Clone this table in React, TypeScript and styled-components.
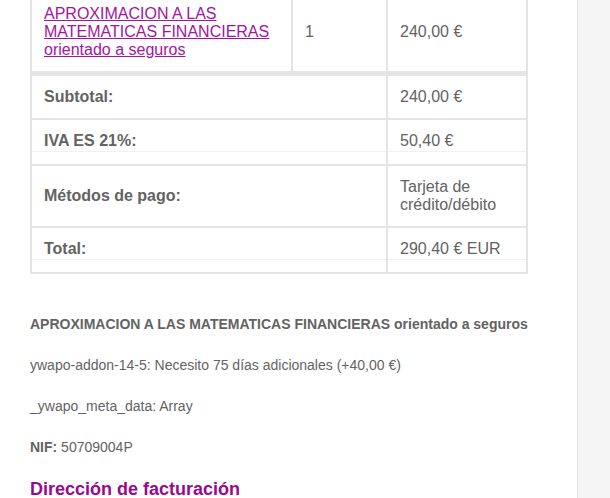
import styled, { createGlobalStyle, css } from "styled-components";

const GlobalStyle = createGlobalStyle`
  html, body {
    margin: 0;
    padding: 0;
    background: #ffffff;
  }
  body {
    font-family: "Liberation Sans", Arial, Helvetica, sans-serif;
    color: #636363;
  }
`;

const Page = styled.div`
  display: flex;
  height: 498px;
  overflow: hidden;
`;

const Main = styled.main`
  width: 577px;
  flex-shrink: 0;
  box-sizing: border-box;
  padding: 0 16px 0 30px;
`;

// the page is scrolled: the product row starts above the fold
const Scrolled = styled.div`
  margin-top: -9px;
`;

const Sidebar = styled.aside`
  flex: 1;
  background: #f5f5f5;
  border-left: 1px solid #e1e1e1;
`;

const OrderTable = styled.table`
  width: 498px;
  table-layout: fixed;
  border-collapse: separate;
  border-spacing: 0;
  border: 1px solid #e5e5e5;
  margin-bottom: 40px;
  font-size: 16px;
  color: #636363;
`;

const Col = styled.col<{ $w: number }>`
  width: ${(p) => p.$w}px;
`;

const cellBase = css<{ $first?: boolean; $rule?: boolean }>`
  box-sizing: border-box;
  border: 1px solid #e5e5e5;
  border-top-width: ${(p) => (p.$first ? "4px" : "1px")};
  padding: 12px;
  padding-bottom: ${(p) => (p.$rule ? "14px" : "12px")};
  text-align: left;
  vertical-align: middle;
  line-height: normal;
  ${(p) =>
    p.$rule &&
    css`
      background: linear-gradient(#f1f1f1, #f1f1f1) no-repeat left 0 bottom 12px / 100% 1px;
    `}
`;

const Cell = styled.td<{ $first?: boolean; $rule?: boolean }>`
  ${cellBase}
  font-weight: 400;
`;

const Label = styled.th<{ $first?: boolean; $rule?: boolean }>`
  ${cellBase}
  font-weight: 700;
`;

const ProductLink = styled.a`
  color: #a3149f;
  text-decoration: underline;
  font-weight: 400;
`;

const Meta = styled.div`
  display: flex;
  flex-direction: column;
  gap: 20px;
`;

const MetaLine = styled.p<{ $strong?: boolean }>`
  margin: 0;
  font-size: 14px;
  line-height: 21px;
  white-space: nowrap;
  font-weight: ${(p) => (p.$strong ? 700 : 400)};
`;

const Heading = styled.h2`
  margin: 20px 0 0;
  font-size: 18px;
  line-height: 130%;
  font-weight: 700;
  color: #97098f;
`;

const totals = [
  { label: "Subtotal:", value: ["240,00 €"] },
  { label: "IVA ES 21%:", value: ["50,40 €"], rule: true },
  { label: "Métodos de pago:", value: ["Tarjeta de", "crédito/débito"] },
  { label: "Total:", value: ["290,40 € EUR"], rule: true },
];

export default function App() {
  return (
    <>
      <GlobalStyle />
      <Page>
        <Main>
          <Scrolled>
            <OrderTable>
              <colgroup>
                <Col $w={261} />
                <Col $w={95} />
                <Col $w={140} />
              </colgroup>
              <tbody>
                <tr>
                  <Cell>
                    <ProductLink href="#">
                      APROXIMACION A LAS MATEMATICAS FINANCIERAS orientado a seguros
                    </ProductLink>
                  </Cell>
                  <Cell>1</Cell>
                  <Cell>240,00 €</Cell>
                </tr>
              </tbody>
              <tfoot>
                {totals.map((row, i) => (
                  <tr key={row.label}>
                    <Label colSpan={2} $first={i === 0} $rule={row.rule}>
                      {row.label}
                    </Label>
                    <Cell $first={i === 0} $rule={row.rule}>
                      {row.value.map((v, j) => (
                        <span key={v}>
                          {j > 0 && <br />}
                          {v}
                        </span>
                      ))}
                    </Cell>
                  </tr>
                ))}
              </tfoot>
            </OrderTable>

            <Meta>
              <MetaLine $strong>APROXIMACION A LAS MATEMATICAS FINANCIERAS orientado a seguros</MetaLine>
              <MetaLine>ywapo-addon-14-5: Necesito 75 días adicionales (+40,00 €)</MetaLine>
              <MetaLine>_ywapo_meta_data: Array</MetaLine>
              <MetaLine>
                <strong>NIF:</strong> 50709004P
              </MetaLine>
            </Meta>
            <Heading>Dirección de facturación</Heading>
          </Scrolled>
        </Main>
        <Sidebar />
      </Page>
    </>
  );
}
